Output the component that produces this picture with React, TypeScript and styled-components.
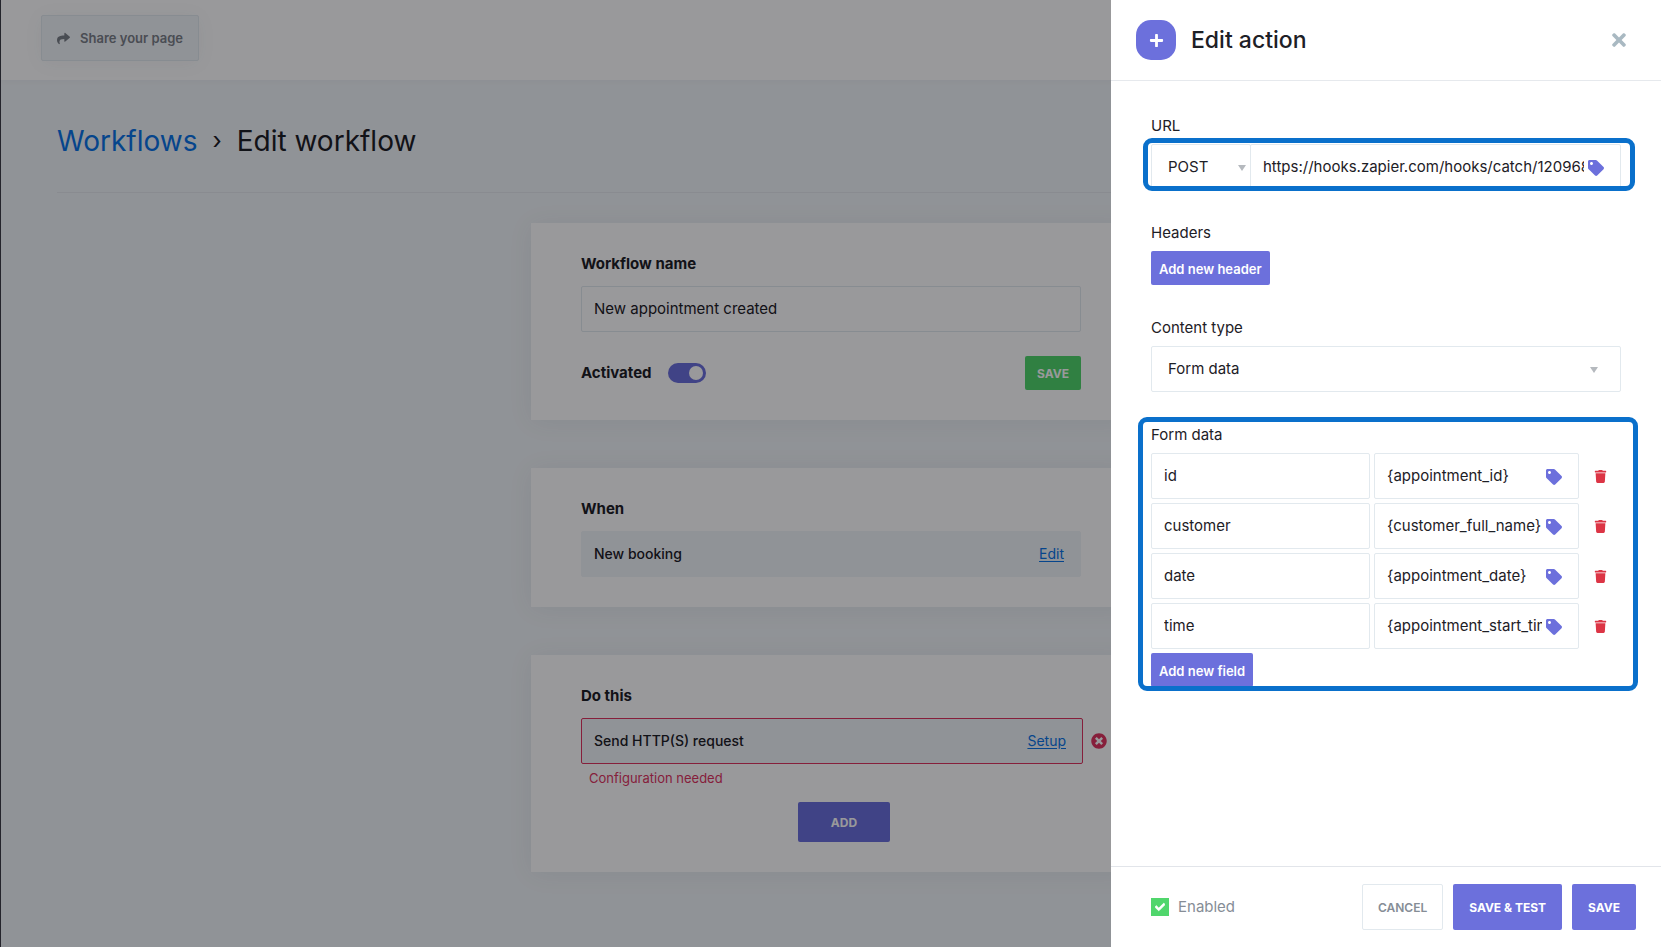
import React, { useState } from "react";
import styled, { createGlobalStyle, css } from "styled-components";
import { FaCheck, FaPlus, FaShare, FaTag, FaTimes, FaTimesCircle, FaTrash } from "react-icons/fa";

const color = {
  ink: "#1d2026",
  muted: "#868d96",
  purple: "#6c70dc",
  green: "#50d66c",
  red: "#dc3545",
  danger: "#e0355f",
  link: "#0a74e6",
  border: "#e2e9ee",
  page: "#f1f5f8",
  highlight: "#0a70cb",
};

const GlobalStyle = createGlobalStyle`
  *, *::before, *::after { box-sizing: border-box; }
  body {
    margin: 0;
    background: ${color.page};
    color: ${color.ink};
    font-family: Inter, "Open Sans", sans-serif;
    font-size: 15px;
    line-height: 22px;
  }
  button, input, select { font: inherit; color: inherit; margin: 0; }
  button { cursor: pointer; }
`;

const Page = styled.div`
  min-height: 100vh;
  border-left: 1px solid #3c3c46;
`;

const TopBar = styled.header`
  display: flex;
  align-items: center;
  height: 80px;
  padding: 0 40px 4px;
  background: #fff;
  box-shadow: 0 1px 6px rgba(60, 70, 90, 0.04);
`;

const ShareButton = styled.button`
  display: flex;
  align-items: center;
  gap: 10px;
  height: 46px;
  padding: 0 15px;
  background: ${color.page};
  border: 1px solid ${color.border};
  border-radius: 2px;
  box-shadow: 0 2px 20px rgba(60, 70, 90, 0.05);
  color: #7b8088;
  font-size: 13px;
  font-weight: 600;
  white-space: nowrap;
`;

const Main = styled.main`
  padding: 40px 56px;
`;

const Breadcrumb = styled.h1`
  display: flex;
  align-items: center;
  gap: 15px;
  margin: 0 0 30px;
  padding-bottom: 30px;
  border-bottom: 1px solid #e4e8ed;
  font-size: 28px;
  font-weight: 400;
  line-height: 42px;

  a { color: ${color.link}; text-decoration: none; }
  span { font-size: 24px; }
`;

const Cards = styled.div`
  display: flex;
  flex-direction: column;
  gap: 48px;
  width: 100%;
  max-width: 600px;
  margin: 0 auto;
`;

const Card = styled.section`
  padding: 30px 50px;
  background: #fff;
  box-shadow: 0 2px 24px rgba(60, 70, 90, 0.07);
`;

const cardLabel = css`
  display: block;
  margin: 0 0 11px;
  font-size: 15px;
  font-weight: 700;
  line-height: 22px;
`;
const CardLabel = styled.label`${cardLabel}`;
const CardTitle = styled.h2`${cardLabel}`;

const TextInput = styled.input<{ $tagged?: boolean }>`
  width: 100%;
  height: 46px;
  padding: 0 ${(p) => (p.$tagged ? 36 : 12)}px 2px 12px;
  background: #fff;
  border: 1px solid ${color.border};
  border-radius: 2px;
`;

const ActivationRow = styled.div`
  display: flex;
  align-items: center;
  gap: 16px;
  margin-top: 24px;
  font-weight: 700;
`;

const Switch = styled.input`
  appearance: none;
  position: relative;
  width: 38px;
  height: 20px;
  border-radius: 10px;
  background: #c5cad2;

  &::before {
    content: "";
    position: absolute;
    top: 3px;
    left: 3px;
    width: 14px;
    height: 14px;
    border-radius: 50%;
    background: #fff;
  }
  &:checked { background: ${color.purple}; }
  &:checked::before { left: 21px; }
`;

const Button = styled.button<{
  $tone?: "purple" | "green" | "plain";
  $size?: "small" | "compact" | "medium" | "large";
}>`
  flex: none;
  border: 1px solid transparent;
  border-radius: 2px;
  font-size: 12px;
  line-height: 18px;
  font-weight: ${(p) => (p.$tone === "plain" ? 600 : 700)};
  white-space: nowrap;
  ${(p) => p.$tone === "plain"
    ? css`background: #fff; border-color: ${color.border}; color: ${color.muted};`
    : css`background: ${p.$tone === "green" ? color.green : color.purple}; color: #fff;`}
  ${(p) => ({
    small: css`height: 34px; padding: 2px 7px 0; font-size: 13px; font-weight: 600;`,
    compact: css`height: 34px; padding: 2px 11px 0;`,
    medium: css`height: 40px; padding: 2px 32px 0;`,
    large: css`height: 46px; padding: 2px 15px 0;`,
  })[p.$size || "small"]}
`;

const PushRight = styled.div`
  display: flex;
  gap: 10px;
  margin-left: auto;
`;

const Step = styled.div<{ $invalid?: boolean }>`
  display: flex;
  align-items: center;
  justify-content: space-between;
  flex: 1 0 auto;
  height: 46px;
  padding: 0 16px 0 12px;
  background: ${color.page};
  border: 1px solid ${(p) => (p.$invalid ? color.danger : color.page)};
  border-radius: 2px;
  font-size: 14px;
  font-weight: 500;

  a { color: ${color.link}; font-weight: 400; text-underline-offset: 2px; }
`;

const StepRow = styled.div`
  display: flex;
  align-items: center;
  gap: 8px;
  margin-right: -26px;
`;

const IconButton = styled.button`
  display: flex;
  flex: none;
  align-items: center;
  justify-content: center;
  padding: 0;
  border: 0;
  background: none;
`;

const RemoveStep = styled(IconButton)`
  color: ${color.danger};
  font-size: 16px;
`;

const ErrorText = styled.p`
  margin: 3px 8px 13px;
  color: ${color.danger};
  font-size: 13px;
`;

const Centered = styled.div`
  display: flex;
  justify-content: center;
  margin-right: -26px;
`;

const Backdrop = styled.div`
  position: fixed;
  inset: 0;
  background: rgba(0, 0, 4, 0.4);
`;

const Drawer = styled.aside`
  position: fixed;
  top: 0;
  right: 0;
  bottom: 0;
  display: flex;
  flex-direction: column;
  width: 550px;
  max-width: 100%;
  background: #fff;
`;

const DrawerHeader = styled.header`
  display: flex;
  align-items: center;
  gap: 15px;
  height: 81px;
  padding: 0 32px 0 25px;
  border-bottom: 1px solid #e6e9ed;

  h2 {
    flex: 1;
    margin: 0;
    font-size: 23px;
    font-weight: 500;
    line-height: 32px;
  }
`;

const Badge = styled.span`
  display: flex;
  align-items: center;
  justify-content: center;
  width: 40px;
  height: 40px;
  border-radius: 15px;
  background: ${color.purple};
  color: #fff;
  font-size: 15px;
`;

const CloseButton = styled(IconButton)`
  color: #a9b9c2;
  font-size: 20px;
`;

const DrawerBody = styled.div`
  display: flex;
  flex: 1;
  flex-direction: column;
  gap: 32px;
  min-height: 0;
  overflow: auto;
  padding: 34px 40px;
`;

const Group = styled.div`
  position: relative;
  display: flex;
  flex-direction: column;
  align-items: flex-start;
  gap: 7px;
`;

const FieldLabel = styled.label`
  font-size: 15px;
  line-height: 22px;
`;

const Highlighted = styled.div<{ $around: "control" | "group" }>`
  position: relative;
  width: 100%;

  &::after {
    content: "";
    position: absolute;
    inset: ${(p) => (p.$around === "group" ? "-7px -17px -4px -13px" : "-6px -14px -1px -8px")};
    border: 5px solid ${color.highlight};
    border-radius: 9px;
    pointer-events: none;
  }
`;

const Joined = styled.div`
  display: flex;
`;

const SelectBox = styled.div<{ $joined?: boolean }>`
  position: relative;
  flex: none;
  width: ${(p) => (p.$joined ? "100px" : "100%")};
  margin-right: ${(p) => (p.$joined ? "-1px" : "0")};

  select {
    appearance: none;
    display: block;
    width: 100%;
    height: 46px;
    padding: 0 16px;
    background: #fff;
    border: 1px solid ${color.border};
    border-radius: 2px;
  }
  &::after {
    content: "";
    position: absolute;
    top: 21px;
    right: ${(p) => (p.$joined ? 5 : 23)}px;
    border: 4px solid transparent;
    border-top: 6px solid #b5b9be;
    border-bottom: 0;
    pointer-events: none;
  }
`;

const TaggedBox = styled.div`
  position: relative;
  flex: 1;
  min-width: 0;
`;

const TagButton = styled(IconButton)`
  position: absolute;
  top: 16px;
  right: 17px;
  color: ${color.purple};
  font-size: 16px;
`;

const Rows = styled.div`
  display: flex;
  flex-direction: column;
  align-items: flex-start;
  gap: 4px;
  margin-top: 7px;
`;

const Row = styled.div`
  display: grid;
  grid-template-columns: 219fr 205fr 34px;
  align-items: center;
  gap: 4px;
  width: 100%;
  padding-right: 4px;
`;

const TrashButton = styled(IconButton)`
  color: ${color.red};
  font-size: 13px;
`;

const DrawerFooter = styled.footer`
  display: flex;
  align-items: center;
  height: 81px;
  padding: 0 25px 0 40px;
  border-top: 1px solid #e2e5ea;
`;

const CheckLabel = styled.label`
  position: relative;
  display: flex;
  align-items: center;
  gap: 9px;
  color: ${color.muted};

  input {
    appearance: none;
    width: 18px;
    height: 18px;
    border: 1px solid ${color.green};
  }
  input:checked { background: ${color.green}; }
  svg {
    position: absolute;
    left: 4px;
    color: #fff;
    stroke: #fff;
    stroke-width: 40px;
    font-size: 10px;
    pointer-events: none;
  }
`;

function TaggedInput({ id, label, value }: { id: string; label: string; value: string }) {
  const [text, setText] = useState(value);
  return (
    <TaggedBox>
      <TextInput $tagged id={id} aria-label={label} value={text} onChange={(e) => setText(e.target.value)} />
      <TagButton type="button" aria-label="Insert tag"><FaTag /></TagButton>
    </TaggedBox>
  );
}

const fields = [
  ["id", "{appointment_id}"],
  ["customer", "{customer_full_name}"],
  ["date", "{appointment_date}"],
  ["time", "{appointment_start_time}"],
];

export default function App() {
  return (
    <>
      <GlobalStyle />
      <Page>
        <TopBar>
          <ShareButton type="button"><FaShare />Share your page</ShareButton>
        </TopBar>
        <Main>
          <Breadcrumb>
            <a href="#workflows">Workflows</a><span>›</span>Edit workflow
          </Breadcrumb>
          <Cards>
            <Card>
              <CardLabel htmlFor="workflow-name">Workflow name</CardLabel>
              <TextInput id="workflow-name" defaultValue="New appointment created" />
              <ActivationRow>
                <label htmlFor="activated">Activated</label>
                <Switch id="activated" type="checkbox" role="switch" defaultChecked />
                <PushRight><Button type="button" $tone="green" $size="compact">SAVE</Button></PushRight>
              </ActivationRow>
            </Card>
            <Card>
              <CardTitle>When</CardTitle>
              <Step>New booking<a href="#edit">Edit</a></Step>
            </Card>
            <Card>
              <CardTitle>Do this</CardTitle>
              <StepRow>
                <Step $invalid>Send HTTP(S) request<a href="#setup">Setup</a></Step>
                <RemoveStep type="button" aria-label="Remove step"><FaTimesCircle /></RemoveStep>
              </StepRow>
              <ErrorText>Configuration needed</ErrorText>
              <Centered><Button type="button" $size="medium">ADD</Button></Centered>
            </Card>
          </Cards>
        </Main>
      </Page>
      <Backdrop />
      <Drawer role="dialog" aria-labelledby="drawer-title">
        <DrawerHeader>
          <Badge><FaPlus /></Badge>
          <h2 id="drawer-title">Edit action</h2>
          <CloseButton type="button" aria-label="Close"><FaTimes /></CloseButton>
        </DrawerHeader>
        <DrawerBody>
          <Group>
            <FieldLabel htmlFor="url">URL</FieldLabel>
            <Highlighted $around="control">
              <Joined>
                <SelectBox $joined>
                  <select aria-label="Method" defaultValue="POST">
                    <option>POST</option>
                    <option>GET</option>
                  </select>
                </SelectBox>
                <TaggedInput id="url" label="URL" value="https://hooks.zapier.com/hooks/catch/12096842/" />
              </Joined>
            </Highlighted>
          </Group>
          <Group>
            <FieldLabel as="span">Headers</FieldLabel>
            <Button type="button">Add new header</Button>
          </Group>
          <Group>
            <FieldLabel htmlFor="content-type">Content type</FieldLabel>
            <SelectBox>
              <select id="content-type" defaultValue="Form data">
                <option>Form data</option>
                <option>JSON</option>
              </select>
            </SelectBox>
          </Group>
          <Highlighted $around="group">
            <FieldLabel as="span">Form data</FieldLabel>
            <Rows>
              {fields.map(([name, value]) => (
                <Row key={name}>
                  <TextInput aria-label="Field name" defaultValue={name} />
                  <TaggedInput id={"value-" + name} label={name + " value"} value={value} />
                  <TrashButton type="button" aria-label={"Delete " + name}><FaTrash /></TrashButton>
                </Row>
              ))}
              <Button type="button">Add new field</Button>
            </Rows>
          </Highlighted>
        </DrawerBody>
        <DrawerFooter>
          <CheckLabel>
            <input type="checkbox" defaultChecked />
            <FaCheck />
            Enabled
          </CheckLabel>
          <PushRight>
            <Button type="button" $tone="plain" $size="large">CANCEL</Button>
            <Button type="button" $size="large">SAVE &amp; TEST</Button>
            <Button type="button" $size="large">SAVE</Button>
          </PushRight>
        </DrawerFooter>
      </Drawer>
    </>
  );
}
